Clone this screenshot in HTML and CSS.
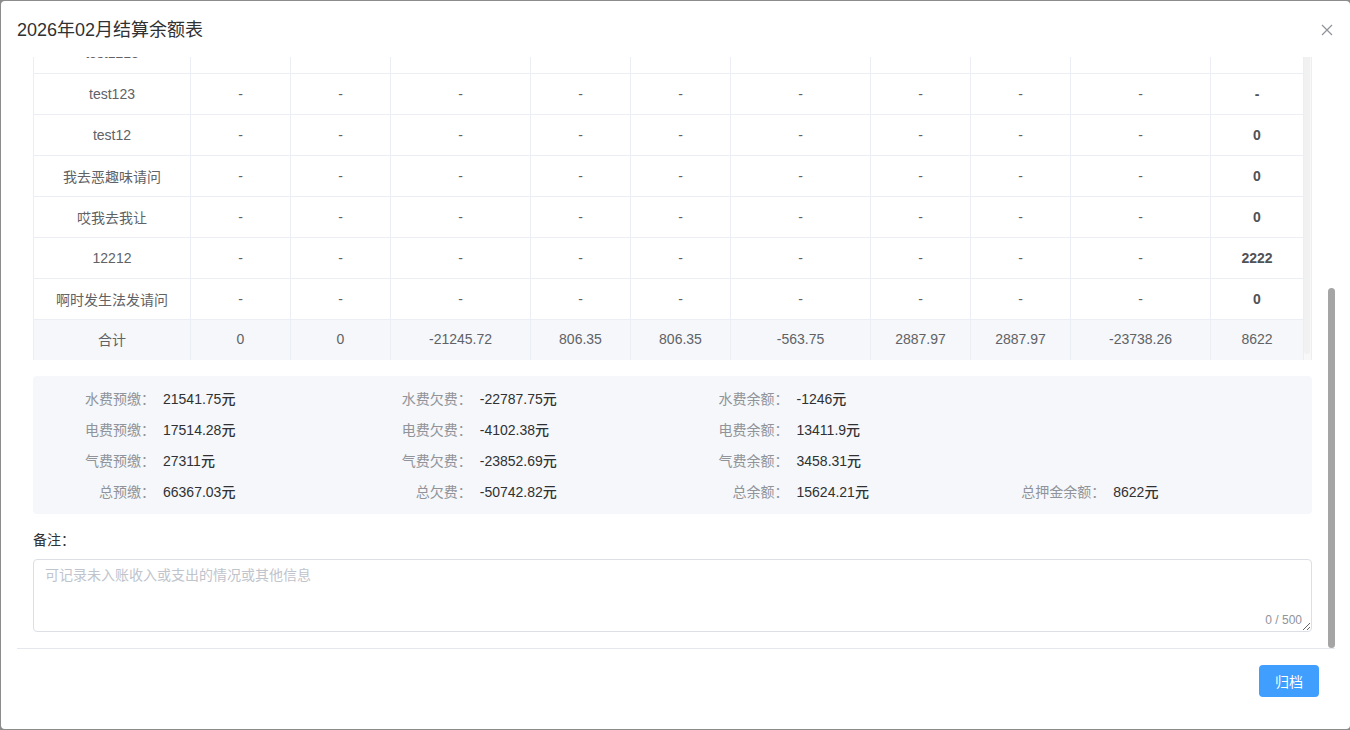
FILE: index.html
```html
<!DOCTYPE html>
<html lang="zh-CN">
<head>
    <meta charset="utf-8">
    <title>2026年02月结算余额表</title>
    <link rel="stylesheet" href="styles.css">
</head>
<body>
    <div class="dialog">
        <div class="dialog-header">
            <span class="dialog-title">2026年02月结算余额表</span>
            <button class="dialog-close" type="button">
                <svg width="12" height="12" viewBox="0 0 12 12">
                    <path d="M1 1L11 11M11 1L1 11" stroke="#909399" stroke-width="1.2" fill="none"/>
                </svg>
            </button>
        </div>

        <div class="dialog-body">
            <div class="body-inner">
                <!-- 明细表 -->
                <div class="table">
                    <div class="table-main">
                        <div class="row">
                            <div class="cell">test1213</div>
                            <div class="cell">-</div><div class="cell">-</div><div class="cell">-</div>
                            <div class="cell">-</div><div class="cell">-</div><div class="cell">-</div>
                            <div class="cell">-</div><div class="cell">-</div><div class="cell">-</div>
                            <div class="cell strong">-</div>
                        </div>
                        <div class="row">
                            <div class="cell">test123</div>
                            <div class="cell">-</div><div class="cell">-</div><div class="cell">-</div>
                            <div class="cell">-</div><div class="cell">-</div><div class="cell">-</div>
                            <div class="cell">-</div><div class="cell">-</div><div class="cell">-</div>
                            <div class="cell strong">-</div>
                        </div>
                        <div class="row">
                            <div class="cell">test12</div>
                            <div class="cell">-</div><div class="cell">-</div><div class="cell">-</div>
                            <div class="cell">-</div><div class="cell">-</div><div class="cell">-</div>
                            <div class="cell">-</div><div class="cell">-</div><div class="cell">-</div>
                            <div class="cell strong">0</div>
                        </div>
                        <div class="row">
                            <div class="cell">我去恶趣味请问</div>
                            <div class="cell">-</div><div class="cell">-</div><div class="cell">-</div>
                            <div class="cell">-</div><div class="cell">-</div><div class="cell">-</div>
                            <div class="cell">-</div><div class="cell">-</div><div class="cell">-</div>
                            <div class="cell strong">0</div>
                        </div>
                        <div class="row">
                            <div class="cell">哎我去我让</div>
                            <div class="cell">-</div><div class="cell">-</div><div class="cell">-</div>
                            <div class="cell">-</div><div class="cell">-</div><div class="cell">-</div>
                            <div class="cell">-</div><div class="cell">-</div><div class="cell">-</div>
                            <div class="cell strong">0</div>
                        </div>
                        <div class="row">
                            <div class="cell">12212</div>
                            <div class="cell">-</div><div class="cell">-</div><div class="cell">-</div>
                            <div class="cell">-</div><div class="cell">-</div><div class="cell">-</div>
                            <div class="cell">-</div><div class="cell">-</div><div class="cell">-</div>
                            <div class="cell strong">2222</div>
                        </div>
                        <div class="row">
                            <div class="cell">啊时发生法发请问</div>
                            <div class="cell">-</div><div class="cell">-</div><div class="cell">-</div>
                            <div class="cell">-</div><div class="cell">-</div><div class="cell">-</div>
                            <div class="cell">-</div><div class="cell">-</div><div class="cell">-</div>
                            <div class="cell strong">0</div>
                        </div>
                        <div class="row total">
                            <div class="cell">合计</div>
                            <div class="cell">0</div>
                            <div class="cell">0</div>
                            <div class="cell">-21245.72</div>
                            <div class="cell">806.35</div>
                            <div class="cell">806.35</div>
                            <div class="cell">-563.75</div>
                            <div class="cell">2887.97</div>
                            <div class="cell">2887.97</div>
                            <div class="cell">-23738.26</div>
                            <div class="cell">8622</div>
                        </div>
                    </div>
                    <div class="table-gutter"><div class="gutter-thumb"></div></div>
                </div>

                <!-- 汇总 -->
                <div class="summary">
                    <div class="item"><span class="label">水费预缴：</span><span class="value">21541.75元</span></div>
                    <div class="item"><span class="label">水费欠费：</span><span class="value">-22787.75元</span></div>
                    <div class="item"><span class="label">水费余额：</span><span class="value">-1246元</span></div>
                    <div class="item"></div>

                    <div class="item"><span class="label">电费预缴：</span><span class="value">17514.28元</span></div>
                    <div class="item"><span class="label">电费欠费：</span><span class="value">-4102.38元</span></div>
                    <div class="item"><span class="label">电费余额：</span><span class="value">13411.9元</span></div>
                    <div class="item"></div>

                    <div class="item"><span class="label">气费预缴：</span><span class="value">27311元</span></div>
                    <div class="item"><span class="label">气费欠费：</span><span class="value">-23852.69元</span></div>
                    <div class="item"><span class="label">气费余额：</span><span class="value">3458.31元</span></div>
                    <div class="item"></div>

                    <div class="item"><span class="label">总预缴：</span><span class="value">66367.03元</span></div>
                    <div class="item"><span class="label">总欠费：</span><span class="value">-50742.82元</span></div>
                    <div class="item"><span class="label">总余额：</span><span class="value">15624.21元</span></div>
                    <div class="item"><span class="label">总押金余额：</span><span class="value">8622元</span></div>
                </div>

                <!-- 备注 -->
                <div class="remark-label">备注：</div>
                <div class="remark-box">
                    <textarea class="remark-input" rows="3" maxlength="500" placeholder="可记录未入账收入或支出的情况或其他信息"></textarea>
                    <span class="remark-count">0 / 500</span>
                </div>
            </div>
            <div class="scroll-thumb"></div>
        </div>

        <div class="dialog-footer">
            <button class="btn-primary" type="button">归档</button>
        </div>
    </div>
</body>
</html>
```

FILE: styles.css
```css
html, body
{
    margin: 0;
    padding: 0;
    height: 100%;
    background: #8c8c8c;
    overflow: hidden;
}
body
{
    font-family: "Liberation Sans", "Noto Sans CJK SC", sans-serif;
    font-size: 14px;
    color: #606266;
}
.dialog
{
    box-sizing: border-box;
    width: 1349px;
    height: 728px;
    margin: 1px 0 1px 1px;
    background: #fff;
    border-radius: 4px;
    display: flex;
    flex-direction: column;
}

/* header */
.dialog-header
{
    height: 56px;
    flex-shrink: 0;
    box-sizing: border-box;
    padding: 1px 17px 0 16px;
    display: flex;
    align-items: center;
    justify-content: space-between;
}
.dialog-title
{
    font-size: 18px;
    line-height: 24px;
    color: #303133;
}
.dialog-close
{
    border: 0;
    background: none;
    padding: 0;
    width: 12px;
    height: 12px;
    display: flex;
}

/* body */
.dialog-body
{
    position: relative;
    height: 592px;
    flex-shrink: 0;
    box-sizing: border-box;
    margin: 0 15px 0 16px;
    padding: 0 23px 16px 16px;
    border-bottom: 1px solid #e4e7ed;
    overflow: hidden;
}
.body-inner
{
    height: 100%;
    display: flex;
    flex-direction: column;
    justify-content: flex-end;
}
.body-inner > *
{
    flex-shrink: 0;
}
.scroll-thumb
{
    position: absolute;
    right: 0;
    bottom: 0;
    width: 7px;
    height: 360px;
    border-radius: 4px;
    background: #a5a5a5;
}

/* table */
.table
{
    display: flex;
    border-left: 1px solid #ebeef5;
    border-right: 1px solid #ebeef5;
    margin-bottom: 16px;
}
.table-main
{
    width: 1270px;
}
.row
{
    display: grid;
    grid-template-columns: 157px 100px 100px 140px 100px 100px 140px 100px 100px 140px 93px;
}
.cell
{
    box-sizing: border-box;
    height: 41px;
    border-right: 1px solid #ebeef5;
    border-bottom: 1px solid #ebeef5;
    display: flex;
    align-items: center;
    justify-content: center;
    white-space: nowrap;
    color: #606266;
}
.cell.strong
{
    font-weight: 700;
    color: #505256;
}
.row.total .cell
{
    height: 40px;
    padding-bottom: 2px;
    border-bottom: 0;
    background: #f5f7fa;
}
.table-gutter
{
    flex: 1;
    position: relative;
    background: #f8f8f8;
}
.gutter-thumb
{
    position: absolute;
    left: 0;
    right: 1px;
    top: 0;
    bottom: 6px;
    border-radius: 3px;
    background: #f1f1f1;
}

/* summary */
.summary
{
    display: grid;
    grid-template-columns: repeat(4, 1fr);
    grid-auto-rows: 31px;
    padding: 7px 6px;
    background: #f5f7fa;
    border-radius: 4px;
    margin-bottom: 16px;
}
.item
{
    display: flex;
    align-items: center;
    padding-bottom: 2px;
}
.label
{
    width: 124px;
    box-sizing: border-box;
    padding-right: 8px;
    text-align: right;
    color: #909399;
}
.value
{
    color: #303133;
    font-weight: 500;
}

/* remark */
.remark-label
{
    line-height: 20px;
    color: #303133;
    margin-bottom: 9px;
}
.remark-box
{
    position: relative;
}
.remark-input
{
    display: block;
    box-sizing: border-box;
    width: 100%;
    height: 73px;
    padding: 5px 11px;
    border: 1px solid #dcdfe6;
    border-radius: 4px;
    font-family: "Liberation Sans", "Noto Sans CJK SC", sans-serif;
    font-size: 14px;
    line-height: 21px;
    color: #606266;
    resize: vertical;
    outline: none;
}
.remark-input::placeholder
{
    color: #c0c4cc;
}
.remark-count
{
    position: absolute;
    right: 10px;
    bottom: 5px;
    font-size: 12px;
    line-height: 14px;
    color: #909399;
    background: #fff;
}

/* footer */
.dialog-footer
{
    flex: 1;
    display: flex;
    justify-content: flex-end;
    align-items: flex-start;
    padding: 16px 31px 0 0;
}
.btn-primary
{
    width: 60px;
    height: 32px;
    border: 0;
    border-radius: 4px;
    background: #409eff;
    color: #fff;
    font-family: "Liberation Sans", "Noto Sans CJK SC", sans-serif;
    font-size: 14px;
    padding: 0;
}
```
